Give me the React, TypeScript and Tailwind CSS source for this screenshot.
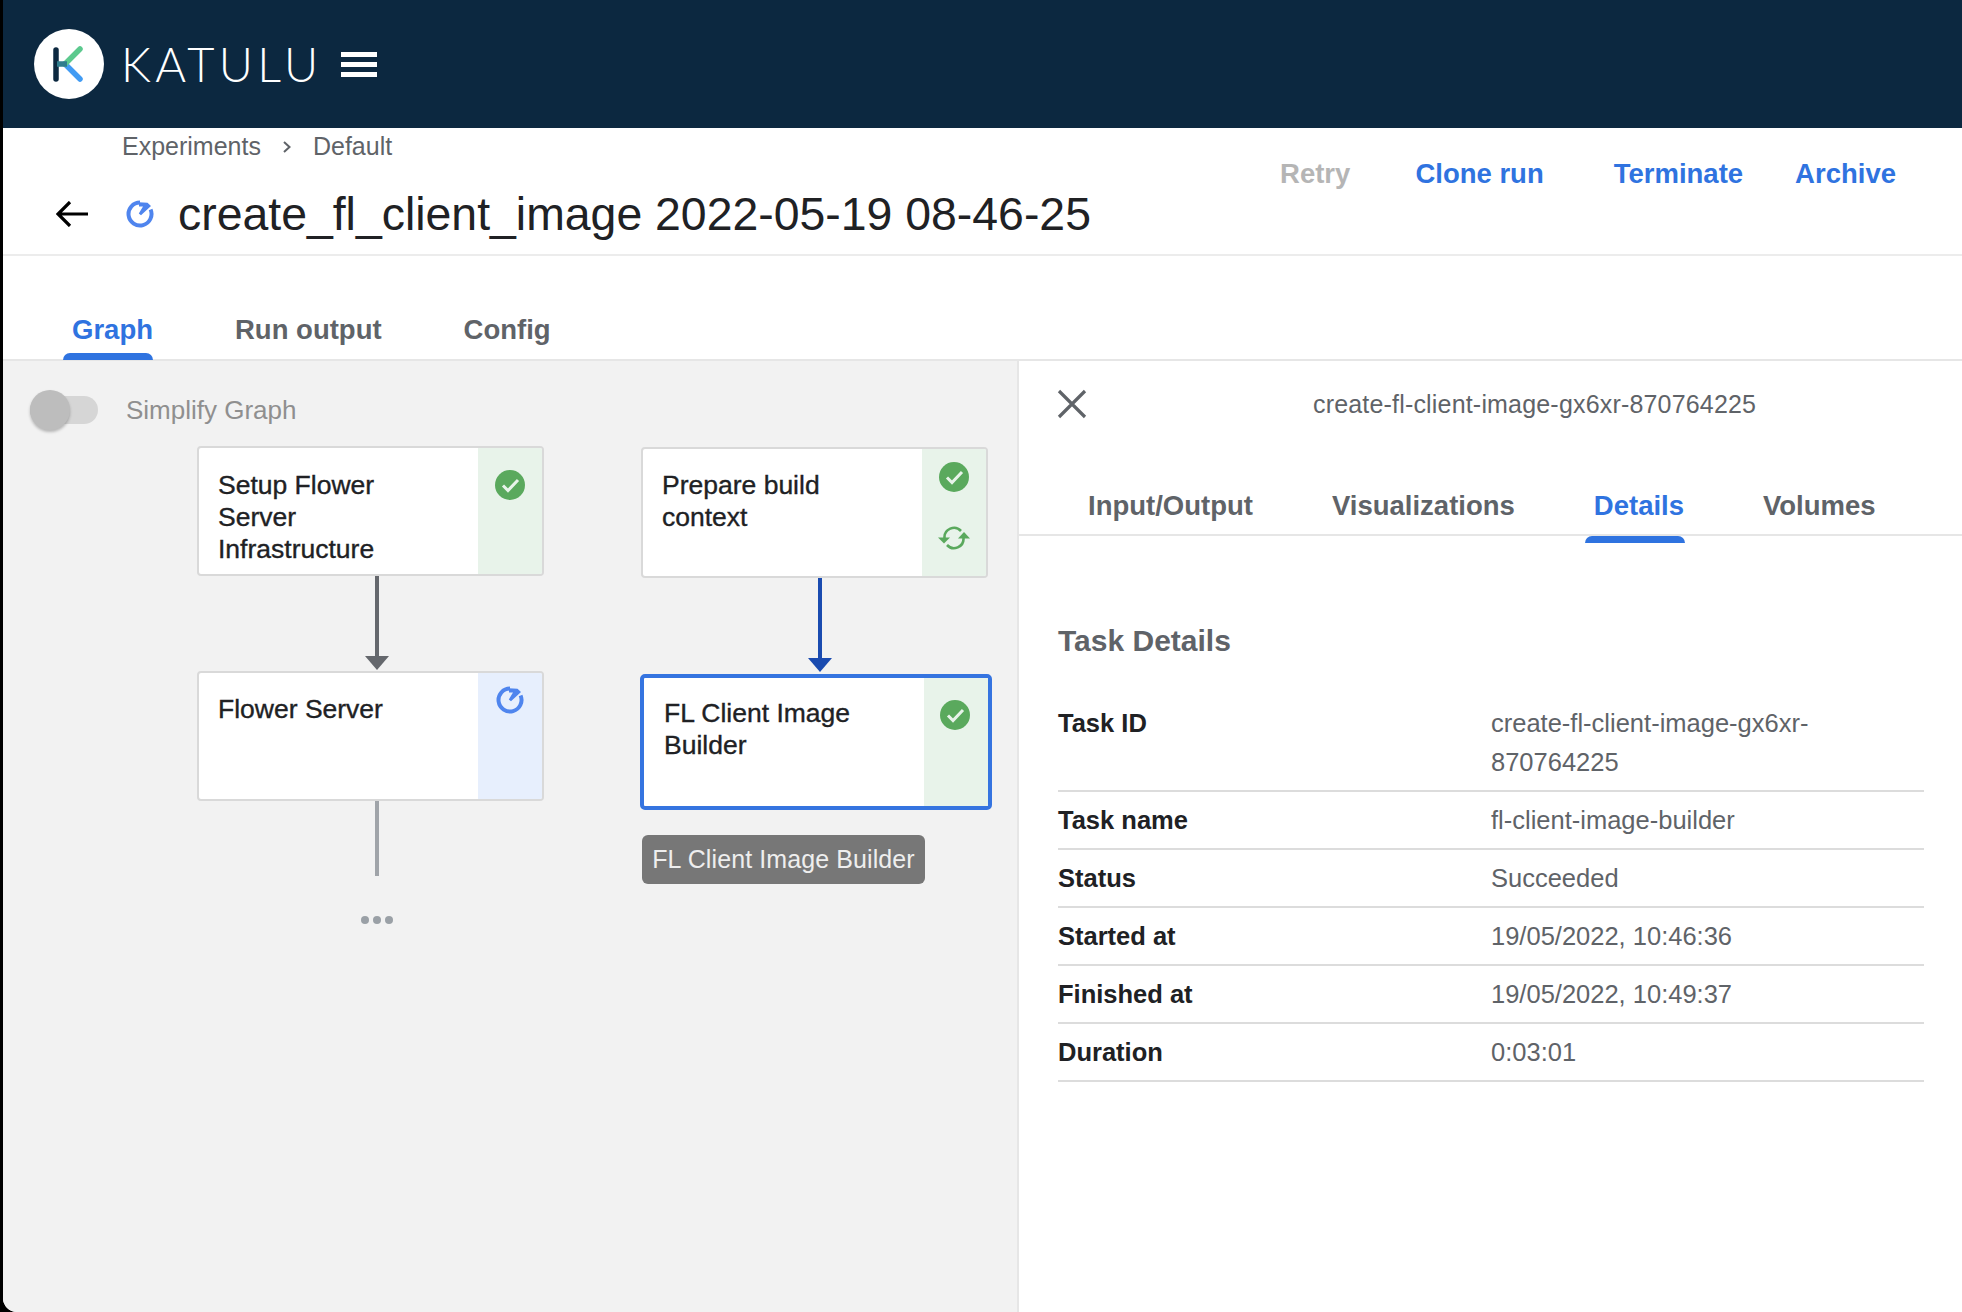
const medium = "[-webkit-text-stroke:0.35px_currentColor]";

function RunningIcon({ size, className }: { size: number; className?: string }) {
  return (
    <svg width={size} height={size} viewBox="0 0 28 28" fill="none" className={className}>
      <path d="M14 2.5A11.5 11.5 0 1 0 24.6 9.5" stroke="#4f85ee" strokeWidth="4" />
      <path d="M13 2.2L21.5 2.8L25 6L15 15.2L12.8 13.6L17 6.5L13 6.5Z" fill="#4f85ee" />
    </svg>
  );
}

function CheckIcon({ className }: { className?: string }) {
  return (
    <svg width="30" height="30" viewBox="0 0 30 30" className={className}>
      <circle cx="15" cy="15" r="15" fill="#5aa95d" />
      <path d="M8 15.5L13 20.5L23 10" fill="none" stroke="#e8f3ea" strokeWidth="3" />
    </svg>
  );
}

function RetryIcon({ className }: { className?: string }) {
  return (
    <svg width="32" height="26" viewBox="0 0 32 26" fill="none" className={className}>
      <path d="M6.5 13A9.5 9.5 0 0 1 23 6" stroke="#5aa95d" strokeWidth="2.6" />
      <path d="M25.5 13A9.5 9.5 0 0 1 9 20" stroke="#5aa95d" strokeWidth="2.6" />
      <path d="M0 12.5L12 12.5L6 18.5Z" fill="#5aa95d" />
      <path d="M20 13.5L32 13.5L26 7Z" fill="#5aa95d" />
    </svg>
  );
}

function Tab({ label, active, barClass }: { label: string; active?: boolean; barClass: string }) {
  return (
    <div className={`relative text-[27.5px] font-bold leading-[34px] ${active ? "text-[#2f73e0]" : "text-[#5f6368]"}`}>
      {label}
      {active && <div className={`absolute h-[7px] rounded-t-[7px] bg-[#2f73e0] ${barClass}`} />}
    </div>
  );
}

function GraphPanel() {
  return (
    <div className="relative w-[1014px] shrink-0 bg-[#f2f2f2]">
      <div className="absolute left-[27px] top-[35px] h-[28px] w-[68px] rounded-full bg-[#d6d6d6]" />
      <div className="absolute left-[27px] top-[29px] h-[40px] w-[40px] rounded-full bg-[#bdbdbd] shadow-[0_2px_3px_rgba(0,0,0,0.25)]" />
      <div className="absolute left-[123px] top-[33px] text-[26px] leading-[32px] text-[#8f8f8f]">Simplify Graph</div>

      <div className="absolute left-[194px] top-[85px] flex h-[130px] w-[347px] overflow-hidden rounded-[4px] border-2 border-[#d9d9d9] bg-white">
        <div className={`flex-1 pl-[19px] pt-[21px] text-[26.5px] leading-[32px] text-[#202124] ${medium}`}>
          Setup Flower
          <br />
          Server
          <br />
          Infrastructure
        </div>
        <div className="w-[64px] bg-[#e8f3ea] pl-[17px] pt-[22px]">
          <CheckIcon />
        </div>
      </div>

      <div className="absolute left-[638px] top-[86px] flex h-[131px] w-[347px] overflow-hidden rounded-[4px] border-2 border-[#d9d9d9] bg-white">
        <div className={`flex-1 pl-[19px] pt-[20px] text-[26.5px] leading-[32px] text-[#202124] ${medium}`}>
          Prepare build
          <br />
          context
        </div>
        <div className="flex w-[64px] flex-col items-center bg-[#e8f3ea] pt-[13px]">
          <CheckIcon />
          <RetryIcon className="mt-[33px]" />
        </div>
      </div>

      <div className="absolute left-[194px] top-[310px] flex h-[130px] w-[347px] overflow-hidden rounded-[4px] border-2 border-[#d9d9d9] bg-white">
        <div className={`flex-1 pl-[19px] pt-[20px] text-[26.5px] leading-[32px] text-[#202124] ${medium}`}>Flower Server</div>
        <div className="w-[64px] bg-[#e7effd] pl-[18px] pt-[13px]">
          <RunningIcon size={28} />
        </div>
      </div>

      <div className="absolute left-[637px] top-[313px] flex h-[136px] w-[352px] overflow-hidden rounded-[5px] border-4 border-[#3574e0] bg-white">
        <div className={`flex-1 pl-[20px] pt-[19px] text-[26.5px] leading-[32px] text-[#202124] ${medium}`}>
          FL Client Image
          <br />
          Builder
        </div>
        <div className="w-[64px] bg-[#e8f3ea] pl-[16px] pt-[22px]">
          <CheckIcon />
        </div>
      </div>

      <svg className="absolute left-[360px] top-[215px]" width="28" height="300" viewBox="0 0 28 300" fill="none">
        <path d="M14 0V82" stroke="#65686d" strokeWidth="4" />
        <path d="M2 80H26L14 94Z" fill="#65686d" />
        <path d="M14 225V326" stroke="#a0a4a9" strokeWidth="4" />
      </svg>
      <svg className="absolute left-[803px] top-[217px]" width="28" height="100" viewBox="0 0 28 100" fill="none">
        <path d="M14 0V82" stroke="#1a4bb0" strokeWidth="4" />
        <path d="M2 80H26L14 94Z" fill="#1a4bb0" />
      </svg>
      <svg className="absolute left-[356px] top-[550px]" width="36" height="18" viewBox="0 0 36 18">
        <circle cx="6" cy="9" r="4" fill="#9aa0a6" />
        <circle cx="18" cy="9" r="4" fill="#9aa0a6" />
        <circle cx="30" cy="9" r="4" fill="#9aa0a6" />
      </svg>

      <div className="absolute left-[639px] top-[474px] flex h-[49px] w-[283px] items-center justify-center rounded-[6px] bg-[#777777] text-[25px] tracking-[0.1px] text-[#eeeeee]">
        FL Client Image Builder
      </div>
    </div>
  );
}

const rows = [
  { label: "Task ID", value: "create-fl-client-image-gx6xr-\n870764225" },
  { label: "Task name", value: "fl-client-image-builder" },
  { label: "Status", value: "Succeeded" },
  { label: "Started at", value: "19/05/2022, 10:46:36" },
  { label: "Finished at", value: "19/05/2022, 10:49:37" },
  { label: "Duration", value: "0:03:01" },
];

function DetailsPanel() {
  return (
    <div className="flex-1 border-l-2 border-[#e6e6e6] bg-white">
      <div className="flex h-[85px] items-center pl-[38px]">
        <svg width="30" height="30" viewBox="0 0 30 30" fill="none">
          <path d="M2 2L28 28M28 2L2 28" stroke="#5f6368" strokeWidth="3.2" />
        </svg>
        <div className="ml-[226px] pt-[3px] text-[25px] tracking-[0.18px] text-[#5f6368]">create-fl-client-image-gx6xr-870764225</div>
      </div>
      <div className="flex h-[90px] gap-[79px] border-b-2 border-[#e6e6e6] pl-[69px] pt-[43px]">
        <Tab label="Input/Output" barClass="" />
        <Tab label="Visualizations" barClass="" />
        <Tab active label="Details" barClass="left-[-9px] right-[-1px] top-[47px]" />
        <Tab label="Volumes" barClass="" />
      </div>
      <div className="pl-[39px] pr-[38px]">
        <div className="mt-[85px] text-[30px] font-bold leading-[40px] text-[#5f6368]">Task Details</div>
        <div className="mt-[34px]">
          {rows.map((row) => (
            <div key={row.label} className="flex border-b-2 border-[#dcdcdc] py-[8.5px] text-[25.5px] leading-[39px]">
              <div className="w-[433px] shrink-0 font-bold text-[#202124]">{row.label}</div>
              <div className="whitespace-pre-line text-[#5f6368]">{row.value}</div>
            </div>
          ))}
        </div>
      </div>
    </div>
  );
}

export default function App() {
  return (
    <div className="h-[1312px] w-[1962px] overflow-hidden bg-black font-['Liberation_Sans',Arial,sans-serif]">
      <div className="ml-[3px] flex h-full flex-col overflow-hidden rounded-bl-[14px] bg-white">
        <header className="flex h-[128px] shrink-0 items-center bg-[#0c2840] pl-[31px]">
          <svg width="70" height="70" viewBox="0 0 70 70">
            <circle cx="35" cy="35" r="35" fill="#ffffff" />
            <path d="M22 21V50" stroke="#0c2840" strokeWidth="5.5" strokeLinecap="round" />
            <path d="M31 35L46 50" stroke="#419bf3" strokeWidth="5.5" strokeLinecap="round" />
            <path d="M31 35L46 20" stroke="#5cc98e" strokeWidth="5.5" strokeLinecap="round" />
            <path d="M23 35H33" stroke="#2f7d8d" strokeWidth="5.5" />
          </svg>
          <div className="ml-[17px] font-['Lato',sans-serif] text-[47px] font-light leading-none tracking-[4.4px] text-white">KATULU</div>
          <div className="ml-[18px] flex w-[36px] flex-col gap-[5px]">
            <div className="h-[5px] bg-white" />
            <div className="h-[5px] bg-white" />
            <div className="h-[5px] bg-white" />
          </div>
        </header>

        <div className="flex h-[128px] shrink-0 justify-between border-b-2 border-[#ececec]">
          <div>
            <div className="flex h-[38px] items-center pl-[119px] text-[25px] text-[#5f6368]">
              <span>Experiments</span>
              <svg className="mx-[21px]" width="10" height="14" viewBox="0 0 10 14" fill="none">
                <path d="M2 2L7.5 7L2 12" stroke="#5f6368" strokeWidth="2" />
              </svg>
              <span>Default</span>
            </div>
            <div className="mt-[21px] flex items-center pl-[53px]">
              <svg width="32" height="26" viewBox="0 0 32 26" fill="none">
                <path d="M32 13H2M14 1L2 13L14 25" stroke="#000000" strokeWidth="3.2" />
              </svg>
              <RunningIcon size={28} className="ml-[38px]" />
              <div className="ml-[24px] text-[46.4px] leading-[54px] text-[#202124]">create_fl_client_image 2022-05-19 08-46-25</div>
            </div>
          </div>
          <div className="flex gap-[70px] pr-[66px] pt-[29px] text-[27.5px] font-bold leading-[34px] text-[#2f73e0]">
            <span className="text-[#b5b5b5]">Retry</span>
            <span className="-ml-[5px]">Clone run</span>
            <span>Terminate</span>
            <span className="-ml-[18px]">Archive</span>
          </div>
        </div>

        <div className="flex h-[105px] shrink-0 gap-[82px] border-b-2 border-[#e6e6e6] pl-[69px] pt-[57px]">
          <Tab active label="Graph" barClass="left-[-9px] right-[0px] top-[40px]" />
          <Tab label="Run output" barClass="" />
          <Tab label="Config" barClass="" />
        </div>

        <div className="flex min-h-0 flex-1">
          <GraphPanel />
          <DetailsPanel />
        </div>
      </div>
    </div>
  );
}
